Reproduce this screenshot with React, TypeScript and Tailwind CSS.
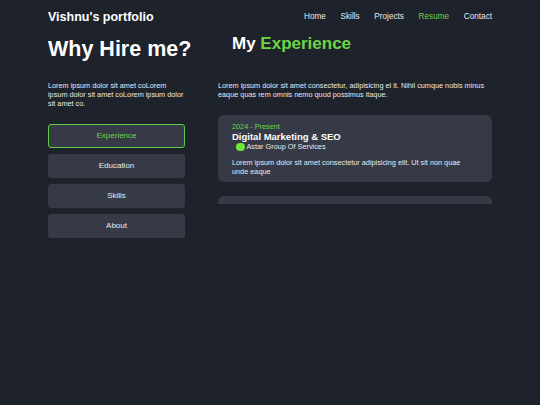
import { useState } from "react";

const navLinks = ["Home", "Skills", "Projects", "Resume", "Contact"];
const tabs = ["Experience", "Education", "Skills", "About"];

const jobs = [
  {
    period: "2024 - Present",
    title: "Digital Marketing & SEO",
    company: "Astar Group Of Services",
    text: "Lorem ipsum dolor sit amet consectetur adipisicing elit. Ut sit non quae unde eaque",
  },
  {
    period: "2022 - 2024",
    title: "Web Developer",
    company: "Astar Group Of Services",
    text: "Lorem ipsum dolor sit amet consectetur adipisicing elit. Ut sit non quae unde eaque",
  },
];

export default function App() {
  const [active, setActive] = useState("Experience");

  return (
    <div className="min-h-screen w-full bg-[#1e222a] text-white font-['Liberation_Sans',Arial,sans-serif]">
      <div className="mx-auto w-[444px]">
        <header className="flex h-[34px] items-center justify-between">
          <h1 className="text-[12.5px] font-bold leading-none">Vishnu's portfolio</h1>
          <nav className="flex items-center gap-[14.7px] text-[8.2px] leading-none">
            {navLinks.map((link) => (
              <a
                key={link}
                href="#"
                className={link === "Resume" ? "text-[#6cd646]" : "text-[#e8eaee]"}
              >
                {link}
              </a>
            ))}
          </nav>
        </header>

        <main className="flex gap-[33px]">
          <section className="flex w-[137px] shrink-0 flex-col">
            <h2 className="mt-[4.5px] text-[21.5px] font-bold leading-none whitespace-nowrap">
              Why Hire me?
            </h2>
            <p className="mt-[20.5px] text-[7.3px] leading-[9px] text-[#e8eaee]">
              Lorem ipsum dolor sit amet coLorem ipsum dolor sit amet coLorem ipsum dolor sit amet co.
            </p>
            <div className="mt-[16.5px] flex flex-col gap-[6px]">
              {tabs.map((tab) => (
                <button
                  key={tab}
                  onClick={() => setActive(tab)}
                  className={`h-[24px] rounded-[3px] bg-[#353a46] text-[8px] ${
                    active === tab
                      ? "border border-[#62c94a] text-[#6cd646]"
                      : "text-[#e8eaee]"
                  }`}
                >
                  {tab}
                </button>
              ))}
            </div>
          </section>

          <section className="flex min-w-0 flex-1 flex-col">
            <h2 className="mt-[1px] ml-[14px] text-[17px] font-bold leading-none">
              My <span className="text-[#6cd646]">Experience</span>
            </h2>
            <p className="mt-[28.5px] text-[7.3px] leading-[9px] text-[#e8eaee]">
              Lorem ipsum dolor sit amet consectetur, adipisicing el it. Nihil cumque nobis minus
              eaque quas rem omnis nemo quod possimus itaque.
            </p>
            <div className="mt-[16.5px] flex h-[89px] flex-col gap-[14px] overflow-hidden">
              {jobs.map((job) => (
                <div
                  key={job.title}
                  className="shrink-0 rounded-[6px] bg-[#353a46] px-[14px] pt-[6.5px] pb-[6.2px]"
                >
                  <div className="text-[7.3px] leading-[9px] text-[#6cd646]">{job.period}</div>
                  <div className="text-[9.5px] font-bold leading-[11px]">{job.title}</div>
                  <div className="flex h-[11px] items-center gap-[2px] pl-[4px]">
                    <span className="h-[8.5px] w-[8.5px] rounded-full bg-[#73e63a]" />
                    <span className="text-[7.3px] leading-none text-[#e8eaee]">{job.company}</span>
                  </div>
                  <p className="mt-[5.3px] pr-[10px] text-[7.3px] leading-[9px] text-[#e8eaee]">
                    {job.text}
                  </p>
                </div>
              ))}
            </div>
          </section>
        </main>
      </div>
    </div>
  );
}
